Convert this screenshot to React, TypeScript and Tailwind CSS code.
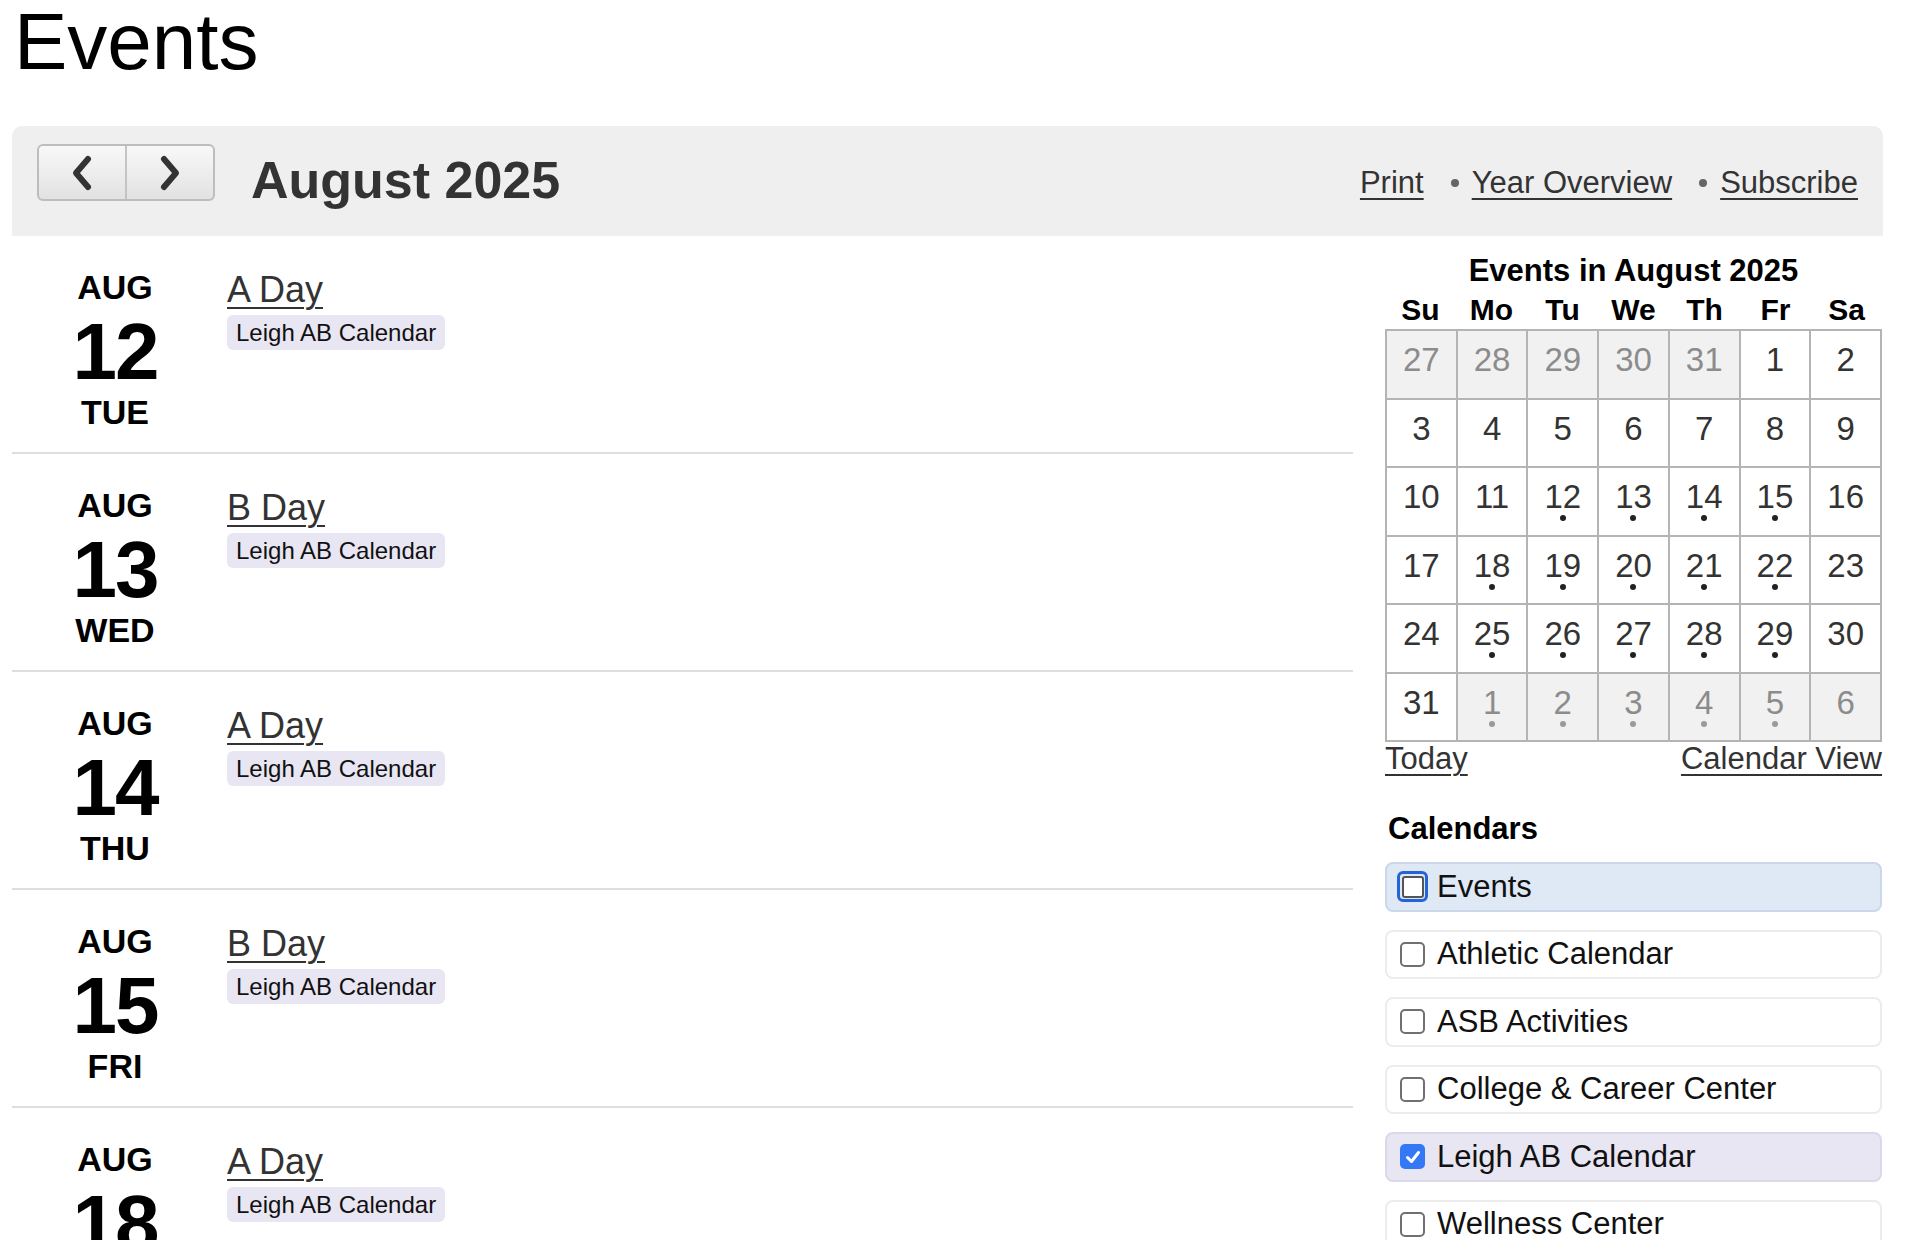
import { Fragment } from 'react'

const font = "font-['Liberation_Sans',Arial,Helvetica,sans-serif]"

const events = [
  { mon: 'AUG', day: '12', dow: 'TUE', title: 'A Day' },
  { mon: 'AUG', day: '13', dow: 'WED', title: 'B Day' },
  { mon: 'AUG', day: '14', dow: 'THU', title: 'A Day' },
  { mon: 'AUG', day: '15', dow: 'FRI', title: 'B Day' },
  { mon: 'AUG', day: '18', dow: 'MON', title: 'A Day' },
]

type Cell = { n: number; other?: boolean; dot?: boolean }

const weeks: Cell[][] = [
  [
    { n: 27, other: true },
    { n: 28, other: true },
    { n: 29, other: true },
    { n: 30, other: true },
    { n: 31, other: true },
    { n: 1 },
    { n: 2 },
  ],
  [3, 4, 5, 6, 7, 8, 9].map((n) => ({ n })),
  [10, 11, 12, 13, 14, 15, 16].map((n) => ({ n, dot: n >= 12 && n <= 15 })),
  [17, 18, 19, 20, 21, 22, 23].map((n) => ({ n, dot: n >= 18 && n <= 22 })),
  [24, 25, 26, 27, 28, 29, 30].map((n) => ({ n, dot: n >= 25 && n <= 29 })),
  [
    { n: 31 },
    { n: 1, other: true, dot: true },
    { n: 2, other: true, dot: true },
    { n: 3, other: true, dot: true },
    { n: 4, other: true, dot: true },
    { n: 5, other: true, dot: true },
    { n: 6, other: true },
  ],
]

const calendars = [
  { name: 'Events', state: 'focus' },
  { name: 'Athletic Calendar', state: 'off' },
  { name: 'ASB Activities', state: 'off' },
  { name: 'College & Career Center', state: 'off' },
  { name: 'Leigh AB Calendar', state: 'checked' },
  { name: 'Wellness Center', state: 'off' },
]

function Chevron({ dir }: { dir: 'left' | 'right' }) {
  return (
    <svg width="26" height="40" viewBox="0 0 26 40" fill="none">
      <polyline
        points={dir === 'left' ? '19,6 7,20 19,34' : '7,6 19,20 7,34'}
        stroke="#333"
        strokeWidth="6"
        strokeLinecap="round"
        strokeLinejoin="round"
      />
    </svg>
  )
}

function Toolbar() {
  return (
    <div className="mt-[44px] h-[110px] bg-[#efefef] rounded-t-[10px] flex items-start pt-[18px] pl-[25px] pr-[25px]">
      <div className="flex h-[57px] w-[178px] rounded-[6px] border-2 border-[#bdbdbd] bg-gradient-to-b from-[#f8f8f8] to-[#e2e2e2] overflow-hidden">
        <button className="flex-1 flex items-center justify-center border-r-2 border-[#c4c4c4]">
          <Chevron dir="left" />
        </button>
        <button className="flex-1 flex items-center justify-center">
          <Chevron dir="right" />
        </button>
      </div>
      <h2 className="ml-[36px] mt-[10px] text-[52px] leading-[52px] font-bold text-[#333]">August 2025</h2>
      <div className="ml-auto mt-[22px] flex items-center text-[31px] leading-[34px] text-[#333]">
        <a className="underline underline-offset-[5px] decoration-2">Print</a>
        <span className="ml-[27px] mr-[13px] w-[8px] h-[8px] rounded-full bg-[#666]" />
        <a className="underline underline-offset-[5px] decoration-2">Year Overview</a>
        <span className="ml-[27px] mr-[13px] w-[8px] h-[8px] rounded-full bg-[#666]" />
        <a className="underline underline-offset-[5px] decoration-2">Subscribe</a>
      </div>
    </div>
  )
}

function EventList() {
  return (
    <div className="w-[1341px]">
      {events.map((e, i) => (
        <div key={i} className="h-[218px] border-b-2 border-[#dedede] flex">
          <div className="w-[206px] pt-[34px] text-center font-bold text-black">
            <div className="text-[34px] leading-[34px]">{e.mon}</div>
            <div className="mt-[12px] text-[80px] leading-[72px] tracking-[-2px]">{e.day}</div>
            <div className="mt-[7px] text-[34px] leading-[34px]">{e.dow}</div>
          </div>
          <div className="ml-[9px] pt-[34px] flex flex-col items-start">
            <a className="text-[36px] leading-[40px] text-[#333] underline underline-offset-[5px] decoration-2">
              {e.title}
            </a>
            <div className="mt-[5px] flex h-[35px] items-center rounded-[6px] bg-[#e9e6f3] px-[9px] text-[24px] text-[#111]">
              Leigh AB Calendar
            </div>
          </div>
        </div>
      ))}
    </div>
  )
}

function MiniCalendar() {
  const days = ['Su', 'Mo', 'Tu', 'We', 'Th', 'Fr', 'Sa']
  return (
    <div>
      <div className="mt-[18px] text-center text-[31px] leading-[34px] font-bold text-black">
        Events in August 2025
      </div>
      <div className="mt-[5px] grid grid-cols-7 text-center text-[30px] leading-[34px] font-bold text-black">
        {days.map((d) => (
          <div key={d}>{d}</div>
        ))}
      </div>
      <div className="mt-[2px] grid grid-cols-7 border-l-2 border-t-2 border-[#b4b4b4]">
        {weeks.map((w, wi) => (
          <Fragment key={wi}>
            {w.map((c, ci) => (
              <div
                key={ci}
                className={
                  'h-[68.5px] border-r-2 border-b-2 border-[#b4b4b4] flex flex-col items-center ' +
                  (c.other ? 'bg-[#f1f1f1] text-[#8c8c8c]' : 'bg-white text-[#333]')
                }
              >
                <div className="pt-[12px] text-[33px] leading-[33px]">{c.n}</div>
                {c.dot && (
                  <div
                    className={
                      'mt-[2px] w-[6px] h-[6px] rounded-full ' + (c.other ? 'bg-[#9a9a9a]' : 'bg-[#222]')
                    }
                  />
                )}
              </div>
            ))}
          </Fragment>
        ))}
      </div>
      <div className="flex justify-between text-[31px] leading-[34px] text-[#333]">
        <a className="underline underline-offset-[5px] decoration-2">Today</a>
        <a className="underline underline-offset-[5px] decoration-2">Calendar View</a>
      </div>
    </div>
  )
}

function CalendarFilters() {
  return (
    <div className="mt-[36px]">
      <div className="pl-[3px] text-[31px] leading-[34px] font-bold text-black">Calendars</div>
      <div className="mt-[16px] flex flex-col gap-[18px]">
        {calendars.map((c) => (
          <label
            key={c.name}
            className={
              'h-[49.5px] flex items-center rounded-[8px] border-2 pl-[13px] ' +
              (c.state === 'focus'
                ? 'bg-[#dfe9f5] border-[#cad8ea]'
                : c.state === 'checked'
                  ? 'bg-[#e9e6f3] border-[#dcd8ea]'
                  : 'bg-white border-[#ececec]')
            }
          >
            {c.state === 'checked' ? (
              <span className="w-[25px] h-[25px] rounded-[5px] bg-[#3478f6] flex items-center justify-center">
                <svg width="18" height="18" viewBox="0 0 18 18" fill="none">
                  <polyline points="3.5,9.5 7.5,13.5 14.5,4.5" stroke="white" strokeWidth="3" strokeLinecap="round" strokeLinejoin="round" />
                </svg>
              </span>
            ) : c.state === 'focus' ? (
              <span className="w-[31px] h-[31px] -mx-[3px] rounded-[6px] border-[3px] border-[#2563d9] flex items-center justify-center">
                <span className="w-[22px] h-[22px] rounded-[3px] border-2 border-[#555] bg-white" />
              </span>
            ) : (
              <span className="w-[25px] h-[25px] rounded-[5px] border-2 border-[#707070] bg-white" />
            )}
            <span className="ml-[12px] text-[31px] text-[#111]">{c.name}</span>
          </label>
        ))}
      </div>
    </div>
  )
}

export default function App() {
  return (
    <div className={`w-[1920px] h-[1240px] overflow-hidden bg-white ${font}`}>
      <div className="pl-[12px] w-[1883px]">
        <h1 className="pt-[2px] pl-[2px] text-[80px] leading-[80px] font-normal text-black">Events</h1>
        <Toolbar />
        <div className="flex gap-[32px]">
          <EventList />
          <div className="w-[497px]">
            <MiniCalendar />
            <CalendarFilters />
          </div>
        </div>
      </div>
    </div>
  )
}
